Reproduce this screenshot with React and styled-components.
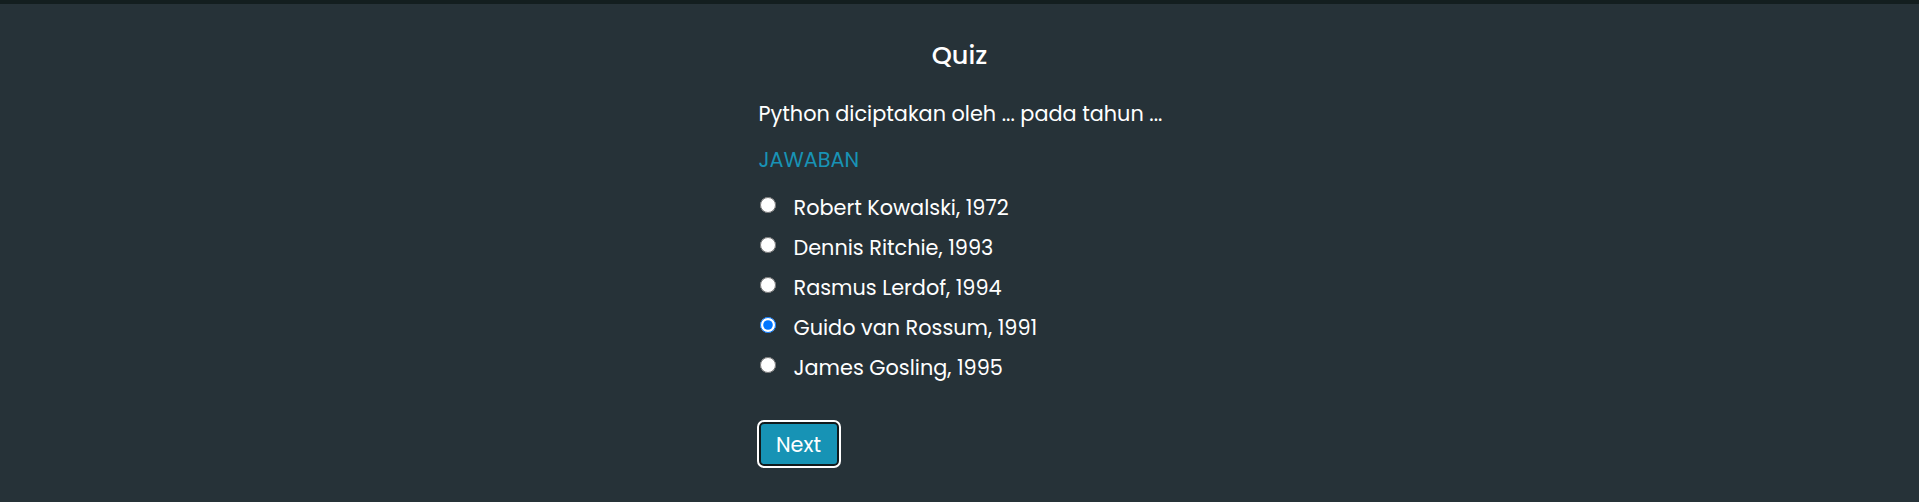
import React, { useState } from 'react'
import styled, { createGlobalStyle } from 'styled-components'

const GlobalStyle = createGlobalStyle`
    body {
        margin: 0;
        background: #263238;
        font-family: Poppins, "Open Sans", "Noto Sans", sans-serif;
        color: #ffffff;
    }
`;

const TopBar = styled.div`
    height: 4px;
    background: #131e1f;
`;

const Page = styled.div`
    min-height: 498px;
    display: flex;
    justify-content: center;
`;

const QuizBox = styled.div`
    width: 402px;
    padding-top: 35px;
`;

const Title = styled.h2`
    margin: 0 0 28px;
    font-size: 25.6px;
    font-weight: 500;
    line-height: 32px;
    text-align: center;
`;

const Question = styled.p`
    margin: 0 0 16px;
    font-size: 20.8px;
    line-height: 30px;
    white-space: nowrap;
`;

const AnswerLabel = styled.div`
    font-size: 20.8px;
    font-weight: 400;
    line-height: 30px;
    color: #1893b5;
    margin-bottom: 18px;
`;

const Options = styled.div`
    display: flex;
    flex-direction: column;
    gap: 10px;
`;

const Option = styled.label`
    display: flex;
    align-items: center;
    gap: 18px;
    font-size: 20.8px;
    line-height: 30px;
    cursor: pointer;
`;

const Radio = styled.input`
    width: 16px;
    height: 16px;
    margin: 0 0 7px 1px;
`;

const NextButton = styled.button`
    margin: 39px 0 0 0;
    width: 80px;
    height: 44px;
    background: #1793b5;
    color: #ffffff;
    border: 2px solid #111a1c;
    border-radius: 5px;
    outline: 2px solid #ffffff;
    outline-offset: 0;
    font-family: inherit;
    font-size: 20.8px;
    cursor: pointer;
`;

const answers = [
    'Robert Kowalski, 1972',
    'Dennis Ritchie, 1993',
    'Rasmus Lerdof, 1994',
    'Guido van Rossum, 1991',
    'James Gosling, 1995',
]

const App = () => {
    const [picked, setPicked] = useState(3)
    return (
        <>
            <GlobalStyle />
            <TopBar />
            <Page>
                <QuizBox>
                    <Title>Quiz</Title>
                    <Question>Python diciptakan oleh ... pada tahun ...</Question>
                    <AnswerLabel>JAWABAN</AnswerLabel>
                    <Options>
                        {answers.map((answer, index) => (
                            <Option key={`answer-${index}`}>
                                <Radio
                                    type="radio"
                                    name="jawaban"
                                    checked={picked === index}
                                    onChange={() => setPicked(index)}
                                />
                                {answer}
                            </Option>
                        ))}
                    </Options>
                    <NextButton>Next</NextButton>
                </QuizBox>
            </Page>
        </>
    )
}

export default App
